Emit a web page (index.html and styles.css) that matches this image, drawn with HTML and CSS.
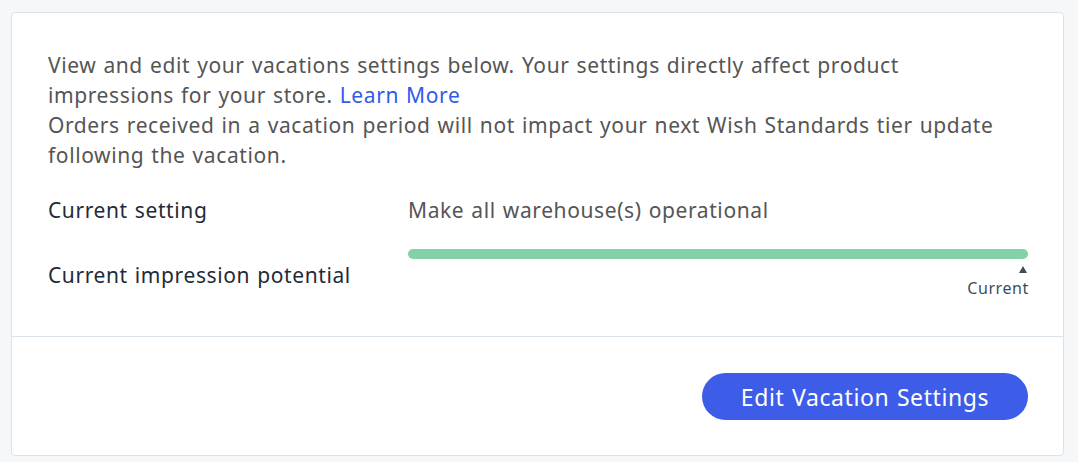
FILE: index.html
```html
<!DOCTYPE html>
<html>
<head>
<meta charset="utf-8">
<link rel="stylesheet" href="styles.css">
</head>
<body>
<div class="card">
  <div class="card-body">
    <p class="intro">View and edit your vacations settings below. Your settings directly affect product<br>impressions for your store. <a class="link" href="#">Learn More</a><br>Orders received in a vacation period will not impact your next Wish Standards tier update<br>following the vacation.</p>
    <div class="grid">
      <div class="label">Current setting</div>
      <div class="value">Make all warehouse(s) operational</div>
      <div class="label">Current impression potential</div>
      <div class="meter">
        <div class="bar"></div>
        <div class="marker">
          <span class="tri"></span>
          <span class="marker-text">Current</span>
        </div>
      </div>
    </div>
  </div>
  <div class="card-footer">
    <button class="btn">Edit Vacation Settings</button>
  </div>
</div>
</body>
</html>
```
FILE: styles.css
```css
html, body {
  margin: 0;
  padding: 0;
  background: #f6f7f9;
}
body {
  padding: 12px 14px 6px 11px;
  font-family: "Noto Sans", "Liberation Sans", sans-serif;
}
.card {
  background: #ffffff;
  border: 1px solid #dbe3e8;
  border-radius: 4px;
}
.card-body {
  padding: 37px 35px 35px 36px;
  border-bottom: 1px solid #dbe3e8;
}
.intro {
  margin: 0;
  font-size: 21px;
  line-height: 30px;
  letter-spacing: 0.6px;
  word-spacing: 1px;
  color: #555555;
  white-space: nowrap;
}
.link {
  color: #2f5bea;
  text-decoration: none;
}
.grid {
  display: grid;
  grid-template-columns: 360px 1fr;
  row-gap: 24px;
  align-items: center;
  margin-top: 25px;
}
.label {
  font-size: 21px;
  line-height: 30px;
  letter-spacing: 0.6px;
  word-spacing: 1px;
  color: #1f2b38;
}
.value {
  font-size: 21px;
  line-height: 30px;
  letter-spacing: 0.6px;
  word-spacing: 1px;
  color: #555555;
}
.meter {
  display: flex;
  flex-direction: column;
  padding-bottom: 3px;
}
.bar {
  height: 10px;
  border-radius: 5px;
  background: #84d1a8;
}
.marker {
  display: flex;
  flex-direction: column;
  align-items: flex-end;
  margin-top: 7px;
}
.tri {
  width: 0;
  height: 0;
  border-left: 4px solid transparent;
  border-right: 4px solid transparent;
  border-bottom: 7px solid #3e4d5c;
  margin-right: 1px;
}
.marker-text {
  font-size: 16px;
  line-height: 20px;
  letter-spacing: 0.6px;
  color: #3e4d5c;
  margin-top: 5px;
  margin-right: -1px;
}
.card-footer {
  display: flex;
  justify-content: flex-end;
  padding: 36px 35px 35px 36px;
}
.btn {
  background: #3d5ce8;
  color: #ffffff;
  border: none;
  border-radius: 24px;
  height: 47px;
  width: 326px;
  font-family: "Noto Sans", "Liberation Sans", sans-serif;
  font-size: 23px;
  letter-spacing: 0.6px;
  word-spacing: 1px;
  padding: 0;
}
```
